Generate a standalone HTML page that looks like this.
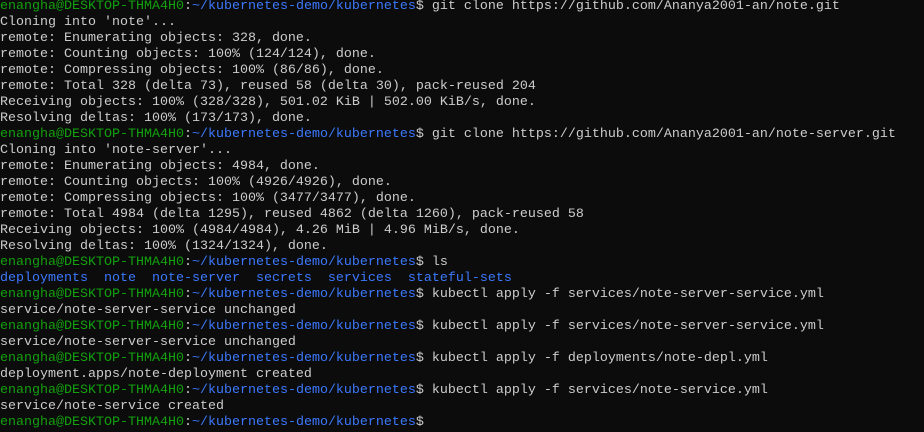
<!DOCTYPE html>
<html><head><meta charset="utf-8"><style>
html,body{margin:0;padding:0;background:#0c0c0c;width:924px;height:432px;overflow:hidden}
pre{margin:0;padding:0 0 0 0;position:absolute;left:0;top:-1px;font-family:"Liberation Mono",monospace;font-size:13.33px;line-height:16px;color:#cccccc;white-space:pre}
.g{color:#13a10e}.b{color:#3b78ff}
</style></head><body><pre><span class="g">enangha@DESKTOP-THMA4H0</span>:<span class="b">~/kubernetes-demo/kubernetes</span>$ git clone https://github.com/Ananya2001-an/note.git
Cloning into 'note'...
remote: Enumerating objects: 328, done.
remote: Counting objects: 100% (124/124), done.
remote: Compressing objects: 100% (86/86), done.
remote: Total 328 (delta 73), reused 58 (delta 30), pack-reused 204
Receiving objects: 100% (328/328), 501.02 KiB | 502.00 KiB/s, done.
Resolving deltas: 100% (173/173), done.
<span class="g">enangha@DESKTOP-THMA4H0</span>:<span class="b">~/kubernetes-demo/kubernetes</span>$ git clone https://github.com/Ananya2001-an/note-server.git
Cloning into 'note-server'...
remote: Enumerating objects: 4984, done.
remote: Counting objects: 100% (4926/4926), done.
remote: Compressing objects: 100% (3477/3477), done.
remote: Total 4984 (delta 1295), reused 4862 (delta 1260), pack-reused 58
Receiving objects: 100% (4984/4984), 4.26 MiB | 4.96 MiB/s, done.
Resolving deltas: 100% (1324/1324), done.
<span class="g">enangha@DESKTOP-THMA4H0</span>:<span class="b">~/kubernetes-demo/kubernetes</span>$ ls
<span class="b">deployments  note  note-server  secrets  services  stateful-sets</span>
<span class="g">enangha@DESKTOP-THMA4H0</span>:<span class="b">~/kubernetes-demo/kubernetes</span>$ kubectl apply -f services/note-server-service.yml
service/note-server-service unchanged
<span class="g">enangha@DESKTOP-THMA4H0</span>:<span class="b">~/kubernetes-demo/kubernetes</span>$ kubectl apply -f services/note-server-service.yml
service/note-server-service unchanged
<span class="g">enangha@DESKTOP-THMA4H0</span>:<span class="b">~/kubernetes-demo/kubernetes</span>$ kubectl apply -f deployments/note-depl.yml
deployment.apps/note-deployment created
<span class="g">enangha@DESKTOP-THMA4H0</span>:<span class="b">~/kubernetes-demo/kubernetes</span>$ kubectl apply -f services/note-service.yml
service/note-service created
<span class="g">enangha@DESKTOP-THMA4H0</span>:<span class="b">~/kubernetes-demo/kubernetes</span>$</pre></body></html>
